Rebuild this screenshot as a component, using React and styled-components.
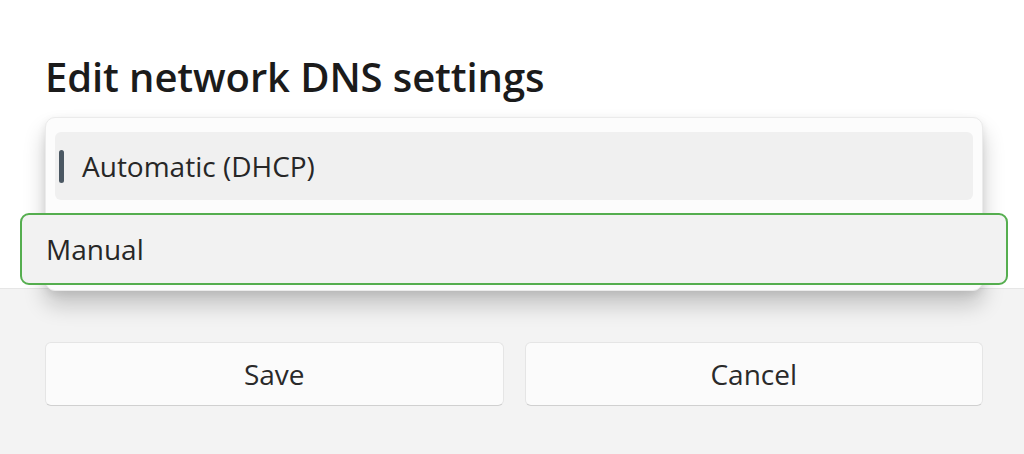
import React from "react";
import styled, { createGlobalStyle } from "styled-components";

const GlobalStyle = createGlobalStyle`
  html, body { margin: 0; padding: 0; background: #ffffff; }
  body { font-family: "Open Sans", "Noto Sans", "Liberation Sans", sans-serif; }
  * { box-sizing: border-box; }
`;

const Dialog = styled.div`
  position: relative;
  width: 1024px;
  height: 454px;
  display: flex;
  flex-direction: column;
  overflow: hidden;
`;

const Content = styled.div`
  flex: 0 0 288px;
  background: #ffffff;
  padding: 51px 45px 0;
`;

const Title = styled.h1`
  margin: 0;
  font-size: 40px;
  line-height: 52px;
  font-weight: 600;
  color: #1b1b1b;
  letter-spacing: -0.1px;
`;

const Footer = styled.div`
  flex: 1;
  background: #f3f3f3;
  border-top: 1px solid #e6e6e6;
  padding: 53px 41px 0 45px;
  display: grid;
  grid-template-columns: 1fr 1fr;
  column-gap: 21px;
  align-items: start;
`;

const Button = styled.button`
  height: 64px;
  background: #fbfbfb;
  border: 1px solid #e5e5e5;
  border-bottom-color: #d0d0d0;
  border-radius: 6px;
  font-family: inherit;
  font-size: 28px;
  color: #2a2a2a;
  padding: 0;
`;

const Popup = styled.div`
  position: absolute;
  left: 45px;
  top: 117px;
  width: 938px;
  background: #fcfcfc;
  border: 1px solid #ebebeb;
  border-radius: 10px;
  box-shadow: 0 14px 22px rgba(0, 0, 0, 0.2), 0 3px 8px rgba(0, 0, 0, 0.08);
  padding: 14px 9px 5px;
  display: flex;
  flex-direction: column;
  gap: 13px;
`;

const Option = styled.div`
  display: flex;
  align-items: center;
  height: ${(p) => (p.$focused ? "72px" : "68px")};
  margin: ${(p) => (p.$focused ? "0 -35px 0 -35px" : "0")};
  padding-left: ${(p) => (p.$focused ? "24px" : "4px")};
  background: ${(p) => (p.$focused ? "#f2f2f2" : "#f0f0f0")};
  border: ${(p) => (p.$focused ? "2px solid #55ae4f" : "none")};
  border-radius: ${(p) => (p.$focused ? "9px" : "6px")};
  font-size: 28px;
  color: #272727;
  gap: 18px;
`;

const Indicator = styled.span`
  width: 5px;
  height: 33px;
  border-radius: 3px;
  background: #4b5863;
  flex: none;
`;

export default function App() {
  return (
    <>
      <GlobalStyle />
      <Dialog>
        <Content>
          <Title>Edit network DNS settings</Title>
        </Content>
        <Footer>
          <Button>Save</Button>
          <Button>Cancel</Button>
        </Footer>
        <Popup role="listbox">
          <Option role="option" aria-selected="true">
            <Indicator />
            Automatic (DHCP)
          </Option>
          <Option role="option" $focused>
            Manual
          </Option>
        </Popup>
      </Dialog>
    </>
  );
}
